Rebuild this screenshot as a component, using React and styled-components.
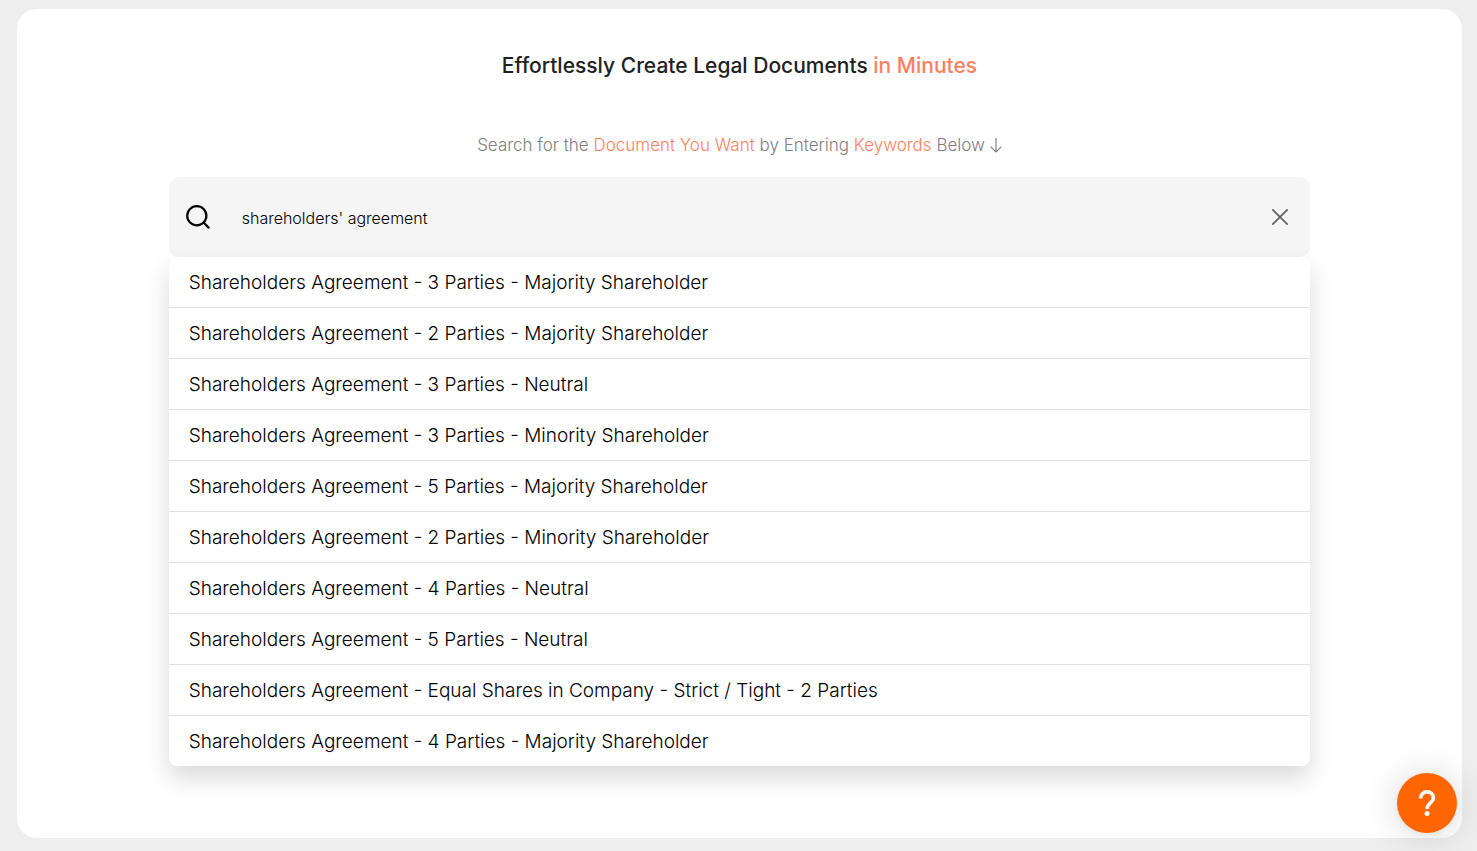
import { useState } from "react";
import styled, { createGlobalStyle } from "styled-components";

const GlobalStyle = createGlobalStyle`
* {
  box-sizing: border-box;
}
body {
  margin: 0;
  background-color: #eee;
  font-family: Inter, "Liberation Sans", sans-serif;
}
`

const documents = [
  "Shareholders Agreement - 3 Parties - Majority Shareholder",
  "Shareholders Agreement - 2 Parties - Majority Shareholder",
  "Shareholders Agreement - 3 Parties - Neutral",
  "Shareholders Agreement - 3 Parties - Minority Shareholder",
  "Shareholders Agreement - 5 Parties - Majority Shareholder",
  "Shareholders Agreement - 2 Parties - Minority Shareholder",
  "Shareholders Agreement - 4 Parties - Neutral",
  "Shareholders Agreement - 5 Parties - Neutral",
  "Shareholders Agreement - Equal Shares in Company - Strict / Tight - 2 Parties",
  "Shareholders Agreement - 4 Parties - Majority Shareholder",
];

const Page = styled.div`
  min-height: 100vh;
  padding: 9px 15px 13px 17px;
  display: flex;
`

const Card = styled.main`
  flex: 1;
  display: flex;
  flex-direction: column;
  align-items: center;
  padding: 41px 0;
  background-color: #fff;
  border-radius: 20px;
`

const Title = styled.h1`
  margin: 0 0 49px;
  font-size: 21px;
  line-height: 32px;
  font-weight: 500;
  color: #212121;
  text-align: center;
`

const Subtitle = styled.label`
  display: flex;
  align-items: center;
  gap: 5px;
  margin-bottom: 18px;
  font-size: 17px;
  line-height: 28px;
  font-weight: 300;
  color: #808080;
`

const Accent = styled.span`
  color: #ff7f5c;
`

const Search = styled.div`
  width: 79%;
`

const SearchBar = styled.div`
  display: flex;
  align-items: center;
  height: 80px;
  padding: 0 18px 0 16px;
  background-color: #f5f5f5;
  border-radius: 10px;
`

const SearchInput = styled.input`
  flex: 1;
  min-width: 0;
  margin-left: 31px;
  padding: 2px 0 0;
  border: none;
  outline: none;
  background: transparent;
  font-family: inherit;
  font-size: 16px;
  line-height: 24px;
  font-weight: 300;
  color: #000;
`

const ClearButton = styled.button`
  display: flex;
  padding: 0;
  border: none;
  background: transparent;
  color: #606060;
  cursor: pointer;
`

const Results = styled.ul`
  margin: 0;
  padding: 0;
  list-style: none;
  background-color: #fff;
  border-radius: 8px;
  box-shadow: 0 12px 24px rgba(0, 0, 0, 0.15);
`

const Result = styled.li`
  border-bottom: 1px solid #e2e2e2;
  &:last-child {
    border-bottom: none;
  }
`

const ResultLink = styled.a`
  display: block;
  padding: 13px 20px 11px;
  font-size: 19px;
  line-height: 26px;
  font-weight: 300;
  color: #000;
  text-decoration: none;
`

const HelpButton = styled.button`
  position: fixed;
  right: 20px;
  bottom: 18px;
  width: 60px;
  height: 60px;
  display: flex;
  align-items: center;
  justify-content: center;
  padding: 0;
  border: none;
  border-radius: 50%;
  background-color: #ff6600;
  box-shadow: 0 1px 6px rgba(0, 0, 0, 0.06), 0 2px 36px rgba(0, 0, 0, 0.16);
  cursor: pointer;
`

const SearchIcon = () => (
  <svg width="26" height="26" viewBox="0 0 26 26" fill="none" stroke="#000" strokeWidth="2.2" strokeLinecap="round">
    <circle cx="11.8" cy="11.8" r="9.6" />
    <path d="M18.8 18.8L23.6 23.6" />
  </svg>
)

const ClearIcon = () => (
  <svg width="24" height="24" viewBox="0 0 24 24" fill="none" stroke="currentColor" strokeWidth="1.7" strokeLinecap="round">
    <path d="M4.8 4.8L19.2 19.2M19.2 4.8L4.8 19.2" />
  </svg>
)

const DownIcon = () => (
  <svg width="12" height="16" viewBox="0 0 12 16" fill="none" stroke="currentColor" strokeWidth="1.2">
    <path d="M6 1V15M0.8 9.8L6 15L11.2 9.8" />
  </svg>
)

const HelpIcon = () => (
  <svg width="18" height="28" viewBox="0 0 18 28" fill="none">
    <path d="M2.6 9.4C2.6 5.6 5.3 2.9 9 2.9C12.8 2.9 15.4 5.3 15.4 8.9C15.4 13.8 9 14.4 9 20" stroke="#fff" strokeWidth="3.6" />
    <circle cx="9" cy="24.6" r="2.5" fill="#fff" />
  </svg>
)

const App = () => {
  const [keyword, setKeyword] = useState("shareholders' agreement");

  return (
    <>
      <GlobalStyle />
      <Page>
        <Card>
          <Title>
            Effortlessly Create Legal Documents <Accent>in Minutes</Accent>
          </Title>
          <Subtitle htmlFor="keyword">
            <span>
              Search for the <Accent>Document You Want</Accent> by Entering <Accent>Keywords</Accent> Below
            </span>
            <DownIcon />
          </Subtitle>
          <Search>
            <SearchBar>
              <SearchIcon />
              <SearchInput
                id="keyword"
                type="text"
                value={keyword}
                onChange={(e) => setKeyword(e.target.value)}
              />
              <ClearButton type="button" aria-label="Clear" onClick={() => setKeyword("")}>
                <ClearIcon />
              </ClearButton>
            </SearchBar>
            {keyword && (
              <Results>
                {documents.map((name) => (
                  <Result key={name}>
                    <ResultLink href="#">{name}</ResultLink>
                  </Result>
                ))}
              </Results>
            )}
          </Search>
        </Card>
      </Page>
      <HelpButton type="button" aria-label="Help">
        <HelpIcon />
      </HelpButton>
    </>
  )
}

export default App
